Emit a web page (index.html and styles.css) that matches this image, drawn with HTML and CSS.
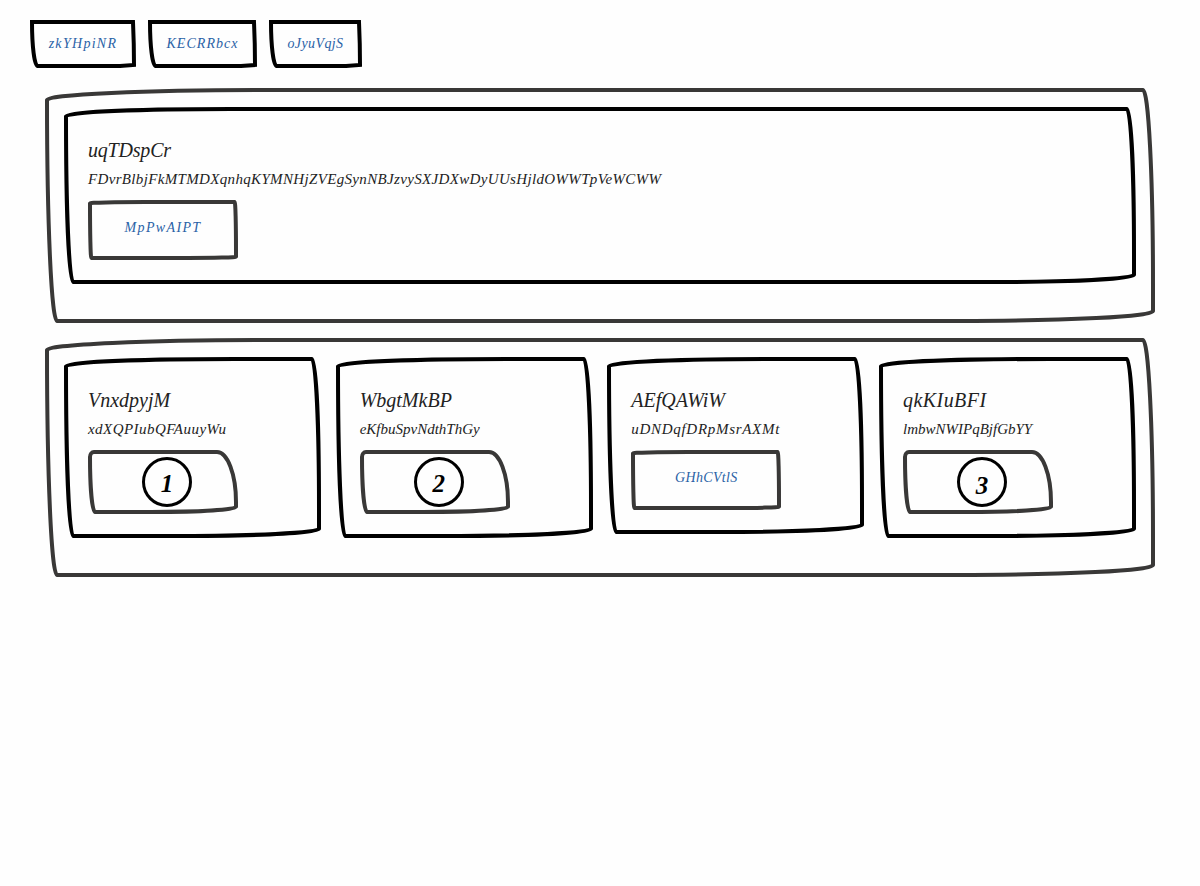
FILE: index.html
```html
<!DOCTYPE html>
<html lang="en">
<head>
<meta charset="utf-8">
<title>Sketch board</title>
<link rel="stylesheet" href="styles.css">
</head>
<body>
<nav class="nav">
  <a class="nav-link nav-first"><svg class="edge"><path d="M2 2H103Q104 24 104 45L90 46H7.5A5.5 44 0 0 1 2 2Z"/></svg><span>zkYHpiNR</span></a>
  <a class="nav-link nav-second"><svg class="edge"><path d="M2 2H106Q107 24 107 45L93 46H7.5A5.5 44 0 0 1 2 2Z"/></svg><span>KECRRbcx</span></a>
  <a class="nav-link nav-third"><svg class="edge"><path d="M2 2H90Q91 24 91 45L77 46H7.5A5.5 44 0 0 1 2 2Z"/></svg><span>oJyuVqjS</span></a>
</nav>
<main class="board">
  <section class="panel">
    <svg class="edge grey"><path d="M2 12A220 10 0 0 1 222 2H1098A10 194 0 0 1 1108 196V223A194 10 0 0 1 914 233H12A10 221 0 0 1 2 12Z"/></svg>
    <article class="card">
      <svg class="edge"><path d="M2 9A165 7 0 0 1 167 2H1063A7 145 0 0 1 1070 147V168A145 7 0 0 1 925 175H9A7 166 0 0 1 2 9Z"/></svg>
      <h2 class="title tight">uqTDspCr</h2>
      <p class="text track-md">FDvrBlbjFkMTMDXqnhqKYMNHjZVEgSynNBJzvySXJDXwDyUUsHjldOWWTpVeWCWW</p>
      <a class="button track-xl"><svg class="edge grey"><path d="M2 3.3A55 1.3 0 0 1 57 2H146.7A1.3 48 0 0 1 148 50V56.7A48 1.3 0 0 1 100 58H3.3A1.3 55 0 0 1 2 3.3Z"/></svg>MpPwAIPT</a>
    </article>
  </section>
  <section class="panel">
    <svg class="edge grey"><path d="M2 12A224 10 0 0 1 226 2H1098A10 197 0 0 1 1108 199V227A197 10 0 0 1 911 237H12A10 225 0 0 1 2 12Z"/></svg>
    <article class="card">
      <svg class="edge"><path d="M2 9A169 7 0 0 1 171 2H248A7 149 0 0 1 255 151V172A149 7 0 0 1 106 179H9A7 170 0 0 1 2 9Z"/></svg>
      <h2 class="title">VnxdpyjM</h2>
      <p class="text track-md2">xdXQPIubQFAuuyWu</p>
      <div class="slot"><svg class="edge grey"><path d="M2 7A4 5 0 0 1 6 2H129A19 50 0 0 1 148 52V57A85 5 0 0 1 63 62H7A5 55 0 0 1 2 7Z"/></svg><span class="circle">1</span></div>
    </article>
    <article class="card">
      <svg class="edge"><path d="M2 9A169 7 0 0 1 171 2H248A7 149 0 0 1 255 151V172A149 7 0 0 1 106 179H9A7 170 0 0 1 2 9Z"/></svg>
      <h2 class="title">WbgtMkBP</h2>
      <p class="text">eKfbuSpvNdthThGy</p>
      <div class="slot"><svg class="edge grey"><path d="M2 7A4 5 0 0 1 6 2H129A19 50 0 0 1 148 52V57A85 5 0 0 1 63 62H7A5 55 0 0 1 2 7Z"/></svg><span class="circle">2</span></div>
    </article>
    <article class="card">
      <svg class="edge"><path d="M2 9A165 7 0 0 1 167 2H248A7 145 0 0 1 255 147V168A145 7 0 0 1 110 175H9A7 166 0 0 1 2 9Z"/></svg>
      <h2 class="title">AEfQAWiW</h2>
      <p class="text track-lg">uDNDqfDRpMsrAXMt</p>
      <a class="button track-md"><svg class="edge grey"><path d="M2 3.3A55 1.3 0 0 1 57 2H146.7A1.3 48 0 0 1 148 50V56.7A48 1.3 0 0 1 100 58H3.3A1.3 55 0 0 1 2 3.3Z"/></svg>GHhCVtlS</a>
    </article>
    <article class="card">
      <svg class="edge"><path d="M2 9A169 7 0 0 1 171 2H248A7 149 0 0 1 255 151V172A149 7 0 0 1 106 179H9A7 170 0 0 1 2 9Z"/></svg>
      <h2 class="title track-md2">qkKIuBFI</h2>
      <p class="text">lmbwNWIPqBjfGbYY</p>
      <div class="slot"><svg class="edge grey"><path d="M2 7A4 5 0 0 1 6 2H129A19 50 0 0 1 148 52V57A85 5 0 0 1 63 62H7A5 55 0 0 1 2 7Z"/></svg><span class="circle low">3</span></div>
    </article>
  </section>
</main>
</body>
</html>
```
FILE: styles.css
```css
* { box-sizing: border-box; }
body {
  margin: 0;
  padding: 20px 30px;
  background: #fefefe;
  color: #222;
  font-family: "Z003", "URW Chancery L", "Liberation Serif", serif;
  font-style: italic;
  font-size: 15px;
}
/* hand-drawn outline laid over a box */
.edge {
  position: absolute;
  inset: 0;
  width: 100%;
  height: 100%;
  overflow: visible;
  fill: none;
  stroke: #000;
  stroke-width: 4px;
}
.grey { stroke: #393837; }
.nav { display: flex; gap: 12px; }
.nav-link {
  position: relative;
  height: 48px;
  display: flex;
  align-items: center;
  justify-content: center;
  color: #2a62a6;
  font-size: 14px;
}
.nav-first { width: 106px; letter-spacing: 1.3px; }
.nav-second { width: 109px; letter-spacing: 1.05px; }
.nav-third { width: 93px; letter-spacing: 0.4px; }
.board {
  padding: 20px 15px;
  display: flex;
  flex-direction: column;
  gap: 15px;
}
.panel {
  position: relative;
  display: flex;
  align-items: flex-start;
  gap: 14.6px;
  padding: 19px 19px 39px;
}
.card {
  position: relative;
  flex: 1 1 0;
  min-width: 0;
  padding: 24px;
}
.title {
  margin: 0;
  height: 34px;
  line-height: 38px;
  font-size: 20px;
  font-weight: 400;
}
.text {
  margin: 0 0 11px;
  height: 24px;
  line-height: 29px;
}
.tight { letter-spacing: -0.2px; }
.track-md { letter-spacing: 0.34px; }
.track-md2 { letter-spacing: 0.45px; }
.track-lg { letter-spacing: 0.7px; }
.track-xl { letter-spacing: 1.35px; }
.button, .slot {
  position: relative;
  width: 150px;
  display: flex;
  align-items: center;
  justify-content: center;
}
.button {
  height: 60px;
  padding-bottom: 4px;
  color: #2a62a6;
  font-size: 14px;
}
.slot {
  height: 64px;
  padding-left: 8px;
}
.circle {
  width: 50px;
  height: 50px;
  border: 3px solid #000;
  border-radius: 50%;
  color: #000;
  font-size: 25px;
  font-weight: 700;
  line-height: 48px;
  text-align: center;
}
.low { line-height: 52px; }
```
